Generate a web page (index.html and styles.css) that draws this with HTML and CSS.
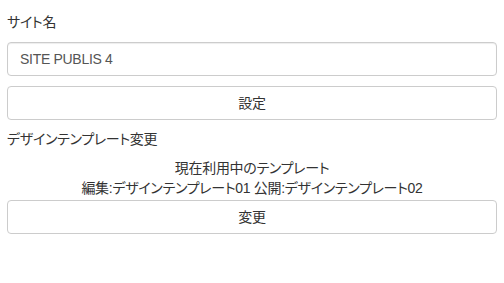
FILE: index.html
```html
<!DOCTYPE html>
<html lang="ja">
<head>
<meta charset="utf-8">
<title>サイト設定</title>
<link rel="stylesheet" href="styles.css">
</head>
<body>
<div class="page">
  <form class="site-form">
    <label class="field-label" for="site-name">サイト名</label>
    <input class="form-control" id="site-name" type="text" value="SITE PUBLIS 4">
    <button class="btn btn-default" type="button">設定</button>
  </form>
  <section class="template-section">
    <div class="section-title">デザインテンプレート変更</div>
    <div class="current-info">
      <div class="info-line">現在利用中のテンプレート</div>
      <div class="info-line">編集:デザインテンプレート01 公開:デザインテンプレート02</div>
    </div>
    <button class="btn btn-default btn-change" type="button">変更</button>
  </section>
</div>
</body>
</html>
```

FILE: styles.css
```css
html, body {
  margin: 0;
  padding: 0;
  background: #fff;
}
body {
  font-family: "Liberation Sans", "Noto Sans CJK JP", sans-serif;
  font-size: 14px;
  line-height: 20px;
  color: #333;
  letter-spacing: -0.3px;
  font-feature-settings: "palt";
}
.page {
  padding: 12px 7px 0;
}
.site-form {
  display: flex;
  flex-direction: column;
  margin: 0;
}
.field-label {
  display: block;
  line-height: 20px;
  margin-bottom: 10px;
}
.form-control {
  box-sizing: border-box;
  width: 100%;
  height: 34px;
  margin: 0;
  padding: 6px 12px;
  font-family: inherit;
  font-size: 14px;
  line-height: 20px;
  letter-spacing: -0.3px;
  color: #555;
  background: #fff;
  border: 1px solid #ccc;
  border-radius: 4px;
  box-shadow: inset 0 1px 1px rgba(0,0,0,.075);
  outline: none;
}
.btn {
  box-sizing: border-box;
  display: block;
  width: 100%;
  height: 34px;
  margin: 10px 0 0;
  padding: 6px 12px;
  font-family: inherit;
  font-size: 14px;
  line-height: 20px;
  letter-spacing: -0.3px;
  color: #333;
  background: #fff;
  border: 1px solid #ccc;
  border-radius: 4px;
  text-align: center;
  font-feature-settings: "palt";
}
.template-section {
  margin-top: 9px;
}
.section-title {
  line-height: 20px;
}
.current-info {
  margin-top: 9px;
  text-align: center;
}
.info-line {
  line-height: 20px;
}
.btn-change {
  margin-top: 2px;
}
```
